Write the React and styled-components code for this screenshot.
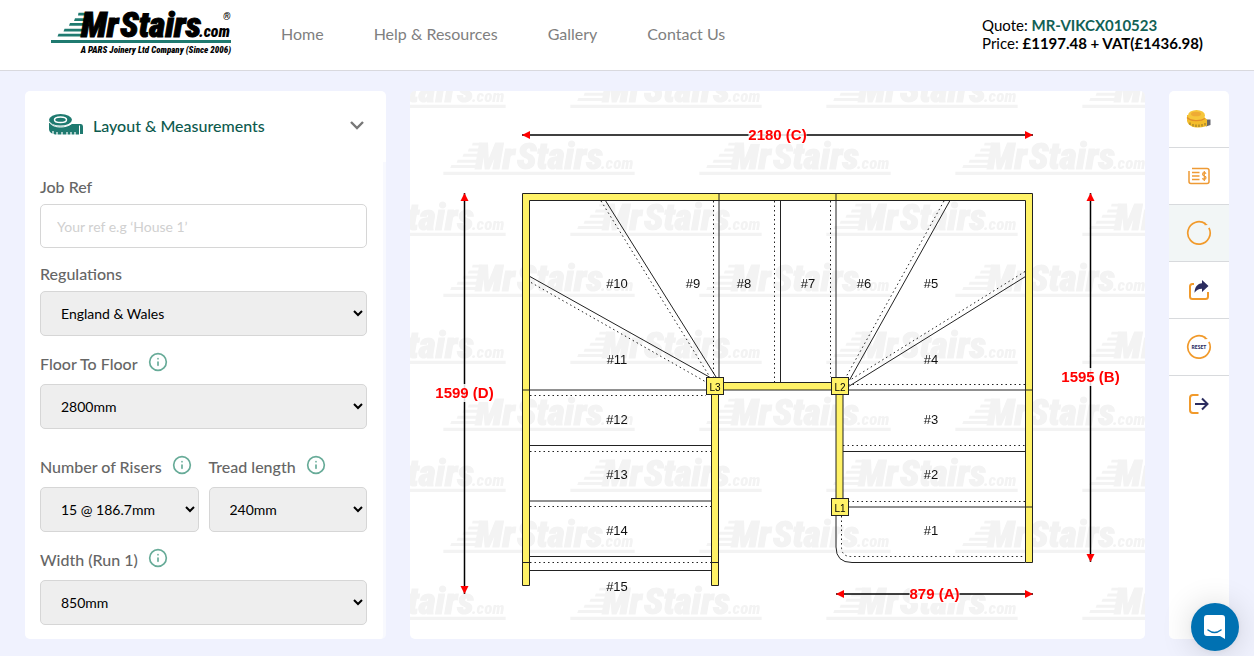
import React, { useState } from "react";
import styled, { createGlobalStyle } from "styled-components";
import { Info } from "lucide-react";

const GlobalStyle = createGlobalStyle`
  * {
    box-sizing: border-box;
  }

  body {
    margin: 0;
    background-color: #f0f2fe;
    font-family: Lato, "Noto Sans", sans-serif;
    font-size: 16px;
    color: #000;
  }
`;

const Header = styled.header`
  display: flex;
  align-items: center;
  gap: 50px;
  height: 71px;
  padding: 0 51px 2px;
  background-color: #fff;
  border-bottom: 1px solid #d9d9de;
`;

const LogoLink = styled.a`
  display: block;
  line-height: 0;
`;

const Nav = styled.nav`
  display: flex;
  flex: 1;
  gap: 50px;
`;

const NavLink = styled.a`
  color: #808080;
  line-height: 20px;
  text-decoration: none;
`;

const QuoteBox = styled.div`
  font-size: 15px;
  line-height: 18px;
`;

const QuoteNumber = styled.strong`
  color: #126156;
`;

const Main = styled.main`
  display: grid;
  grid-template-columns: 361px 1fr 60px;
  gap: 24px;
  padding: 20px 25px 17px;
`;

const Panel = styled.section`
  display: flex;
  flex-direction: column;
`;

const PanelHeader = styled.button`
  display: flex;
  align-items: center;
  gap: 10px;
  height: 71px;
  padding: 0 21px 3px 24px;
  background-color: #fff;
  border: none;
  border-radius: 5px 5px 0 0;
  color: #0d5a4e;
  font-family: Lato, sans-serif;
  font-size: 16px;
  font-weight: 500;
  text-align: left;
  cursor: pointer;
`;

const PanelTitle = styled.span`
  flex: 1;
`;

const PanelBody = styled.form`
  display: flex;
  flex-direction: column;
  gap: 14px;
  padding: 13px 16px 14px 15px;
  background-color: #fff;
  border-right: 3px solid #f8f9fe;
  border-radius: 0 0 5px 5px;
`;

const FieldRow = styled.div`
  display: grid;
  grid-template-columns: 1fr 1fr;
  gap: 10px;
  padding-top: 10px;
`;

const Field = styled.div`
  display: flex;
  flex-direction: column;
  gap: 6px;
  min-width: 0;
`;

const LabelLine = styled.div`
  display: flex;
  align-items: flex-start;
  gap: 10px;
  height: ${(props) => (props.$info ? "28px" : "23px")};
  padding-top: ${(props) => (props.$info ? "2px" : "0")};
`;

const Label = styled.label`
  padding-top: 2px;
  color: #666;
  font-weight: 500;
  line-height: 20px;
`;

const InfoButton = styled.button`
  display: flex;
  padding: 0;
  background: none;
  border: none;
  color: #67ab98;
  cursor: pointer;
`;

const TextInput = styled.input`
  width: 100%;
  height: 44px;
  padding: 0 16px;
  border: 1px solid #d6d6d6;
  border-radius: 5px;
  font-family: Lato, sans-serif;
  font-size: 14px;

  &::placeholder {
    color: #d0d0d0;
  }
`;

const Select = styled.select`
  width: 100%;
  height: 45px;
  padding-left: 16px;
  background-color: #eee;
  border: 1px solid #d6d6d6;
  border-radius: 5px;
  color: #000;
  font-family: Lato, sans-serif;
  font-size: 14px;
`;

const PlanCard = styled.section`
  min-width: 0;
  overflow: hidden;
  background-color: #fff;
  border-radius: 5px;
`;

const PlanSvg = styled.svg`
  display: block;
  width: 100%;
  font-family: "Liberation Sans", Arial, sans-serif;
`;

const ToolBar = styled.aside`
  display: flex;
  flex-direction: column;
  background-color: #fff;
  border-radius: 5px;
`;

const ToolButton = styled.button`
  display: flex;
  align-items: center;
  justify-content: center;
  height: 57px;
  padding: 0;
  background-color: ${(props) => (props.$active ? "#f2f6f6" : "transparent")};
  border: none;
  border-bottom: 1px solid ${(props) => (props.$last ? "transparent" : "#d8dadd")};
  cursor: pointer;
`;

const ChatButton = styled.button`
  position: fixed;
  right: 15px;
  bottom: 5px;
  display: flex;
  align-items: center;
  justify-content: center;
  width: 48px;
  height: 48px;
  padding: 0;
  background-color: #0071b2;
  border: none;
  border-radius: 50%;
  box-shadow: 0 1px 6px rgba(0, 0, 0, 0.06), 0 2px 32px rgba(0, 0, 0, 0.16);
  cursor: pointer;
`;

const LogoSvg = styled.svg`
  overflow: visible;
`;

const LogoText = styled.text`
  font-family: "Roboto Condensed", "DejaVu Sans Condensed", sans-serif;
  font-style: italic;
  font-weight: 900;
`;

const LogoMark = ({ ink, accent }) => (
  <g>
    <g fill={accent}>
      <path d="M27.500 .7H36V3.400H27Z" />
      <path d="M24 6.200H35V9H23Z" />
      <path d="M19 11H34V13.800H18Z" />
      <path d="M13.500 16.700H33V19.500H12.500Z" />
      <path d="M7.500 21.700H32V24.500H6.500Z" />
      <path d="M0 28H180V31H0Z" />
    </g>
    <LogoText x="30" y="25" fontSize="35" fill={ink} stroke={ink} strokeWidth="1">
      Mr
    </LogoText>
    <LogoText x="69" y="25" fontSize="35" fill={ink} stroke={ink} strokeWidth="1">
      Stairs
    </LogoText>
    <LogoText x="148" y="25" fontSize="16" fill={ink}>
      .com
    </LogoText>
  </g>
);

const Logo = () => (
  <LogoSvg width="180" height="44" viewBox="0 0 180 44" role="img" aria-label="MrStairs.com">
    <LogoMark ink="#000" accent="#1f7a70" />
    <LogoText x="172" y="8" fontSize="10">
      ®
    </LogoText>
    <LogoText x="180" y="41" fontSize="9" textAnchor="end">
      A PARS Joinery Ltd Company (Since 2006)
    </LogoText>
  </LogoSvg>
);

const TapeIcon = () => (
  <svg width="34" height="22" viewBox="0 0 34 22" aria-hidden="true">
    <path
      fill="#1f7a70"
      d="M0 7C2 10.500 6 12.500 11.500 12.500C17 12.500 21 11.500 23 10H32Q34 10 34 12.500V20H31V11.500H30V20.500H8C3 20.500 0 18 0 15Z"
    />
    <ellipse cx="11.500" cy="5.800" rx="11.500" ry="5.800" fill="#1f7a70" />
    <ellipse cx="11.500" cy="5.800" rx="6" ry="2.800" fill="none" stroke="#fff" strokeWidth="1.500" />
    <path d="M0 8C3 12 7 13 11.500 13C16 13 20 12 23 9" fill="none" stroke="#fff" />
    <path d="M4 17V21M8 18V21M13 18V21M18 18V21M22 18V21M26 18V21" stroke="#fff" strokeWidth="1.200" />
  </svg>
);

const YellowTapeIcon = () => (
  <svg width="26" height="20" viewBox="0 0 26 20" aria-hidden="true">
    <path fill="#66666c" d="M20 10.500H24.500V16L20 17.500Z" />
    <path fill="#f4bd2c" d="M1 6V12C2 17 8 18.800 13 18.500C17 18.300 20 17.500 21 16.500V10.500L18 8Z" />
    <ellipse cx="10.500" cy="6.500" rx="8.500" ry="5.500" fill="#f6c63b" />
    <ellipse cx="10" cy="5" rx="5" ry="2.300" fill="#eeab35" />
    <path d="M1 8.500C4 12 14 13 19 9.500" fill="none" stroke="#e28f2a" strokeWidth="1.200" />
    <path d="M4 13.500V16M7 15V17.500M10 15.500V18M13 15.500V18M16 15V17.500M19 14V16.500" stroke="#8d7426" />
  </svg>
);

const QuoteIcon = () => (
  <svg width="22" height="18" viewBox="0 0 22 18" fill="none" stroke="#ee9a35" strokeWidth="1.500" aria-hidden="true">
    <path d="M4 1.500H19Q21 1.500 21 3.500V14.500Q21 16.500 19 16.500H3Q1 16.500 1 14.500V4" />
    <path d="M4 5.500H11.500M4 9H11.500M4 12.500H11.500" />
    <path d="M18 6.800C17.300 5.200 14.600 5.300 14.600 7.200C14.600 9.200 18 8.500 18 10.800C18 12.800 15 12.800 14.400 11.200M16.300 4V14" strokeWidth="1.200" />
  </svg>
);

const RingIcon = ({ children }) => (
  <svg width="26" height="26" viewBox="0 0 26 26" aria-hidden="true">
    <path d="M22.900 7.800A11.200 11.200 0 1 1 19.400 3.800" fill="none" stroke="#f19a2b" strokeWidth="1.700" />
    <path d="M18.500 2.200L21.800 5L18.600 5.300Z" fill="#f19a2b" />
    {children}
  </svg>
);

const ShareIcon = () => (
  <svg width="20" height="20" viewBox="0 0 20 20" aria-hidden="true">
    <path
      d="M5 4H3.500Q1 4 1 6.500V16.500Q1 19 3.500 19H16.500Q19 19 19 16.500V12"
      fill="none"
      stroke="#f19a2b"
      strokeWidth="2"
    />
    <path d="M13 0L19.500 6L13 12V8.700C9.500 8.700 7.500 9.800 5.500 12.800C5.700 7 8.500 3.500 13 3.200Z" fill="#2b2c5f" />
  </svg>
);

const ExitIcon = () => (
  <svg width="20" height="20" viewBox="0 0 20 20" fill="none" strokeWidth="2" aria-hidden="true">
    <path d="M9.500 1H4Q1 1 1 4V16Q1 19 4 19H9.500" stroke="#f19a2b" />
    <path d="M6 10H18.500M13 4.500L18.500 10L13 15.500" stroke="#2b2c5f" />
  </svg>
);

const tools = [
  { label: "Layout and measurements", icon: <YellowTapeIcon /> },
  { label: "Quote", icon: <QuoteIcon /> },
  { label: "Refresh", icon: <RingIcon />, active: true },
  { label: "Share", icon: <ShareIcon /> },
  {
    label: "Reset",
    icon: (
      <RingIcon>
        <text
          x="13"
          y="15"
          textAnchor="middle"
          fontFamily="Lato, sans-serif"
          fontSize="5"
          fontWeight="900"
          fill="#2b2c5f"
        >
          RESET
        </text>
      </RingIcon>
    ),
  },
  { label: "Exit", icon: <ExitIcon /> },
];

const watermarkRows = [75, 142, 203, 264, 331, 398, 459, 520, 587];

const beams = [
  "M522.500 193.500H1032.500V562.500H1025.500V200.500H529.500V585.500H522.500Z",
  "M711.500 386.500H718.500V585.500H711.500Z",
  "M718.500 382.500H836.500V390H718.500Z",
  "M836 386.500H843V507H836Z",
];

const newels = [
  { name: "L3", x: 706.5, y: 377.5 },
  { name: "L2", x: 831.5, y: 377.5 },
  { name: "L1", x: 831.5, y: 498.5 },
];

const risers = [
  "M719 193V382M836 193V382M780.500 201V382",
  "M605.700 201L716 377M529.700 276.400L710 377.400",
  "M949.700 201L849.500 380M1025.500 276.500L848.500 386.500",
  "M522 390H711M530 445.500H711M530 501H711M530 556.500H711M530 570.500H711",
  "M522 562.500H530M711 562.500H719",
  "M848 390H1033M843 451.500H1025M848 507H1033",
  "M836 516V547Q836 562.500 852 562.500H1025",
];

const nosings = [
  "M713.500 201V377M774.500 201V382M830.500 201V377",
  "M601 201L710.500 378M531 282.500L706 382",
  "M944 201L846 377M1025 271.500L848.500 381",
  "M530 395.500H706M530 451.500H711M530 506.500H711M530 562.500H711",
  "M848 384.500H1025M843 445.500H1025M848 501.500H1025",
  "M841.500 516V547Q841.500 556.500 851 556.500H1025",
];

const treads = [
  ["#10", 617, 288],
  ["#9", 693, 288],
  ["#8", 744, 288],
  ["#7", 808, 288],
  ["#6", 864, 288],
  ["#5", 931, 288],
  ["#4", 931, 364],
  ["#3", 931, 424],
  ["#2", 931, 479],
  ["#1", 931, 535],
  ["#11", 617, 364],
  ["#12", 617, 424],
  ["#13", 617, 479],
  ["#14", 617, 535],
  ["#15", 617, 591],
];

const dimensions = [
  { text: "2180 (C)", x1: 522, y1: 135, x2: 1033, y2: 135 },
  { text: "879 (A)", x1: 836, y1: 594, x2: 1033, y2: 594 },
  { text: "1599 (D)", x1: 464.5, y1: 193, x2: 464.5, y2: 594 },
  { text: "1595 (B)", x1: 1090.5, y1: 193, x2: 1090.5, y2: 562 },
];

const Dimension = ({ text, x1, y1, x2, y2 }) => {
  const vertical = x1 === x2;
  const cx = (x1 + x2) / 2;
  const cy = Math.floor((y1 + y2) / 2);
  const halfWidth = text.length > 7 ? 29 : 25;
  const heads = vertical
    ? `M${x1} ${y1}L${x1 - 4} ${y1 + 8}H${x1 + 4}ZM${x2} ${y2}L${x2 - 4} ${y2 - 8}H${x2 + 4}Z`
    : `M${x1} ${y1}L${x1 + 8} ${y1 - 4}V${y1 + 4}ZM${x2} ${y2}L${x2 - 8} ${y2 - 4}V${y2 + 4}Z`;

  return (
    <g>
      <line x1={x1} y1={y1} x2={x2} y2={y2} stroke="#000" strokeWidth="1.500" />
      <path d={heads} fill="#f00" />
      <rect x={cx - halfWidth} y={cy - 9} width={halfWidth * 2} height="18" fill="#fff" fillOpacity="0.85" />
      <text x={cx} y={cy + 5} textAnchor="middle" fontSize="15" fontWeight="700" fill="#f00">
        {text}
      </text>
    </g>
  );
};

const StairPlan = () => (
  <PlanSvg viewBox="410 91 735 548" role="img" aria-label="Staircase plan">
    <g opacity="0.05" aria-hidden="true">
      {watermarkRows.map((y, row) =>
        [314, 570, 826, 1082].map((x) => (
          <LogoSvg key={`${x}-${y}`} x={row % 2 ? x + 129 : x} y={y} width="192" height="34" viewBox="0 0 180 32">
            <LogoMark ink="#000" accent="#000" />
          </LogoSvg>
        ))
      )}
    </g>
    <g fill="#fff267" stroke="#222">
      {beams.map((d) => (
        <path key={d} d={d} />
      ))}
    </g>
    <path d={risers.join("")} fill="none" stroke="#222" />
    <path d={nosings.join("")} fill="none" stroke="#222" strokeDasharray="1.500 3" />
    {newels.map(({ name, x, y }) => (
      <g key={name}>
        <rect x={x} y={y} width="17" height="17" fill="#fff267" stroke="#222" />
        <text x={x + 8.5} y={y + 13.5} textAnchor="middle" fontSize="10">
          {name}
        </text>
      </g>
    ))}
    {treads.map(([name, x, y]) => (
      <text key={name} x={x} y={y} textAnchor="middle" fontSize="13" fill="#111">
        {name}
      </text>
    ))}
    {dimensions.map((item) => (
      <Dimension key={item.text} {...item} />
    ))}
  </PlanSvg>
);

const SelectField = ({ id, label, value, options, info, onChange }) => (
  <Field>
    <LabelLine $info={info}>
      <Label htmlFor={id}>{label}</Label>
      {info && (
        <InfoButton type="button" aria-label={`About ${label}`}>
          <Info size={20} />
        </InfoButton>
      )}
    </LabelLine>
    <Select id={id} name={id} value={value} onChange={onChange}>
      {options.map((option) => (
        <option key={option} value={option}>
          {option}
        </option>
      ))}
    </Select>
  </Field>
);

const App = () => {
  const [formvalue, setFormvalue] = useState({
    jobref: "",
    regulations: "England & Wales",
    floor: "2800mm",
    risers: "15 @ 186.7mm",
    tread: "240mm",
    width: "850mm",
  });

  const getform = (e) => {
    setFormvalue({ ...formvalue, [e.target.name]: e.target.value });
  };

  return (
    <>
      <GlobalStyle />
      <Header>
        <LogoLink href="#">
          <Logo />
        </LogoLink>
        <Nav>
          <NavLink href="#home">Home</NavLink>
          <NavLink href="#help">Help &amp; Resources</NavLink>
          <NavLink href="#gallery">Gallery</NavLink>
          <NavLink href="#contact">Contact Us</NavLink>
        </Nav>
        <QuoteBox>
          <div>
            Quote: <QuoteNumber>MR-VIKCX010523</QuoteNumber>
          </div>
          <div>
            Price: <strong>£1197.48 + VAT(£1436.98)</strong>
          </div>
        </QuoteBox>
      </Header>
      <Main>
        <Panel>
          <PanelHeader type="button">
            <TapeIcon />
            <PanelTitle>Layout &amp; Measurements</PanelTitle>
            <svg width="16" height="10" viewBox="0 0 16 10" aria-hidden="true">
              <path d="M2 2L8 8L14 2" fill="none" stroke="#777" strokeWidth="2.400" />
            </svg>
          </PanelHeader>
          <PanelBody>
            <Field>
              <LabelLine>
                <Label htmlFor="jobref">Job Ref</Label>
              </LabelLine>
              <TextInput
                id="jobref"
                name="jobref"
                placeholder="Your ref e.g ‘House 1’"
                value={formvalue.jobref}
                onChange={getform}
              />
            </Field>
            <SelectField
              id="regulations"
              label="Regulations"
              value={formvalue.regulations}
              options={["England & Wales", "Scotland"]}
              onChange={getform}
            />
            <SelectField
              id="floor"
              label="Floor To Floor"
              value={formvalue.floor}
              options={["2600mm", "2700mm", "2800mm"]}
              info
              onChange={getform}
            />
            <FieldRow>
              <SelectField
                id="risers"
                label="Number of Risers"
                value={formvalue.risers}
                options={["14 @ 200mm", "15 @ 186.7mm"]}
                info
                onChange={getform}
              />
              <SelectField
                id="tread"
                label="Tread length"
                value={formvalue.tread}
                options={["230mm", "240mm"]}
                info
                onChange={getform}
              />
            </FieldRow>
            <SelectField
              id="width"
              label="Width (Run 1)"
              value={formvalue.width}
              options={["800mm", "850mm", "900mm"]}
              info
              onChange={getform}
            />
          </PanelBody>
        </Panel>
        <PlanCard>
          <StairPlan />
        </PlanCard>
        <ToolBar>
          {tools.map(({ label, icon, active }, index) => (
            <ToolButton key={label} type="button" aria-label={label} $active={active} $last={index === tools.length - 1}>
              {icon}
            </ToolButton>
          ))}
        </ToolBar>
      </Main>
      <ChatButton type="button" aria-label="Open chat">
        <svg width="24" height="26" viewBox="0 0 24 26" aria-hidden="true">
          <path d="M4 1H19Q22 1 22 4V25L17 22H4Q1 22 1 19V4Q1 1 4 1Z" fill="#fff" />
          <path d="M5 16Q11.500 21 18 16" fill="none" stroke="#0071b2" strokeWidth="1.500" strokeLinecap="round" />
        </svg>
      </ChatButton>
    </>
  );
};

export default App;
